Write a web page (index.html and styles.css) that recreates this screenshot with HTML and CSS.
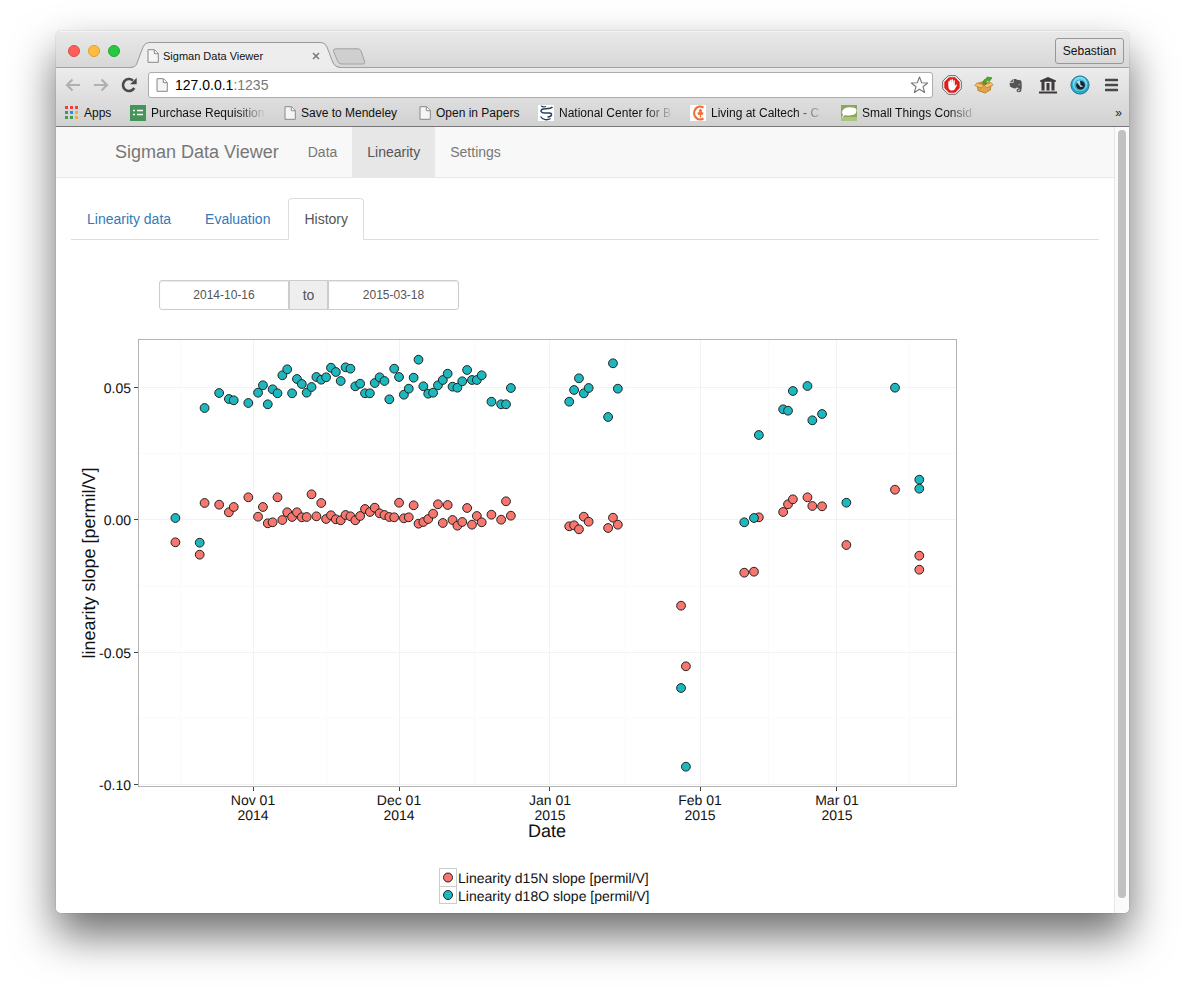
FILE: index.html
```html
<!DOCTYPE html>
<html lang="en">
<head>
<meta charset="utf-8">
<title>Sigman Data Viewer</title>
<link rel="stylesheet" href="styles.css">
</head>
<body>
<svg class="defs" width="0" height="0" aria-hidden="true">
  <symbol id="page" viewBox="0 0 12 14">
    <path d="M1 .7h6.5L11.3 4.5v8.8H1z" fill="#f5f5f5" stroke="#888"/>
    <path d="M7.3.9v3.8h3.8" fill="#fff" stroke="#888"/>
  </symbol>
</svg>
<div class="window">
  <header class="titlebar">
    <div class="lights">
      <button class="light red" aria-label="Close window"></button>
      <button class="light yellow" aria-label="Minimize window"></button>
      <button class="light green" aria-label="Zoom window"></button>
    </div>
    <div class="tab">
      <svg class="tab-shape" viewBox="0 0 210 26" aria-hidden="true">
        <path d="M0 26C5 25 6 24 7 21L13 5Q15 .5 19 .5H191Q195 .5 197 5L203 21Q205 25 210 26z" fill="#ededed"/>
        <path d="M0 25.5C5 25 6 24 7 21L13 5Q15 .5 19 .5H191Q195 .5 197 5L203 21Q205 25 210 25.5" fill="none" stroke="#999"/>
      </svg>
      <svg class="tab-page"><use href="#page"/></svg>
      <span class="tab-title">Sigman Data Viewer</span>
      <button class="tab-close" aria-label="Close tab"><svg width="8" height="8" viewBox="0 0 8 8"><path d="M1 1l6 6M7 1L1 7" stroke="#777" stroke-width="1.5"/></svg></button>
    </div>
    <button class="new-tab" aria-label="New tab"><svg width="34" height="17" viewBox="0 0 34 17"><path d="M4 .8H26Q28 .8 29 3L32.5 13Q33.4 16 31 16H9Q7 16 5.6 13L1.5 3.5Q.8 .8 4 .8z" fill="#cfcfcf" stroke="#a2a2a2"/></svg></button>
    <button class="profile">Sebastian</button>
  </header>

  <div class="chrome">
    <div class="toolbar">
      <button class="tool back" aria-label="Back"><svg width="16" height="14" viewBox="0 0 16 14"><path d="M15 7H2M7.5 1.5L2 7l5.5 5.5" fill="none" stroke="#b0b0b0" stroke-width="2.2"/></svg></button>
      <button class="tool forward" aria-label="Forward"><svg width="16" height="14" viewBox="0 0 16 14"><path d="M1 7h13M8.5 1.5L14 7l-5.5 5.5" fill="none" stroke="#b0b0b0" stroke-width="2.2"/></svg></button>
      <button class="tool reload" aria-label="Reload"><svg width="16" height="16" viewBox="0 0 16 16"><path d="M13.2 11A6 6 0 1 1 12 3.6" fill="none" stroke="#4a4a4a" stroke-width="2.6"/><path d="M15.7 .8V7.300H9z" fill="#4a4a4a"/></svg></button>
      <div class="omnibox">
        <svg class="omni-page"><use href="#page"/></svg>
        <div class="url" role="textbox" aria-label="Address" tabindex="0">127.0.0.1<span class="port">:1235</span></div>
        <button class="tool" aria-label="Bookmark this page"><svg width="19" height="18" viewBox="0 0 19 18"><path d="M9.500 1l2.200 5.700 6 .3-4.700 3.700 1.600 5.800-5.100-3.300-5.100 3.300L6 10.700 1.300 7l6-.3z" fill="#fff" stroke="#777" stroke-width="1.100" stroke-linejoin="round"/></svg></button>
      </div>
      <div class="extensions">
        <button class="tool" aria-label="Ad blocker"><svg width="20" height="20" viewBox="0 0 20 20"><path d="M6.200.7h7.600l5.500 5.500v7.600l-5.500 5.500H6.200L.7 13.800V6.200z" fill="#f4f4f4" stroke="#666"/><path d="M6.900 2.300h6.200l4.600 4.600v6.200l-4.600 4.600H6.900l-4.600-4.600V6.900z" fill="#de1f1c"/><path d="M6.300 10.500V6.400q.7-.8 1.300 0V9l.2-4q.7-.9 1.400 0l.1 3.600.3-4.200q.8-.8 1.400 0V8.800l.5-3.400q.8-.6 1.300.1V11l1-1.300q1-.5 1.300.4l-2.300 4.200q-1 1.300-3.200 1.200-3.300 0-3.300-5z" fill="#fff"/></svg></button>
        <button class="tool" aria-label="Package extension"><svg width="20" height="18" viewBox="0 0 20 18"><path d="M3 7.500l7 2 7-2-.6 6.500L11 17l-7-2.500z" fill="#e2a544" stroke="#a8752a" stroke-width=".8"/><path d="M3 7L.7 9.500 7 12l3-3 2.500 3 6.700-3L17 6.500l-7 2.500z" fill="#f0c272" stroke="#b27c2d" stroke-width=".7"/><path d="M3 7l6-2 8 1.500L10 9z" fill="#c78f3f"/><path d="M9 8c0-4 2-5.500 4.500-5.500L12.800 1 18 1.800l-3 4-.7-1.500c-2 0-2.300 1-2.300 3.900z" fill="#4aac28" stroke="#2d7e1d" stroke-width=".6"/></svg></button>
        <button class="tool" aria-label="Evernote"><svg width="14" height="15" viewBox="0 0 16 17"><path d="M1 4.500L4.500 1v3.500z" fill="#666"/><path d="M5.300 1H8l1 1 4 .6q1 .2 1.200 1.400.8 6-.2 10.500-.5 1.800-2.800 1.800-2.600 0-2.600-2 0-2.400 2.700-2v1.500q-1.200-.2-1.200.6 0 .6 1 .6 1.200 0 1-2.700-2 .3-2.900-2-.5 1.800-2.800 1.500Q2 10.700 1.300 9.500.6 7 .8 5.300h4.500z" fill="#555"/><path d="M10.700 7.800q1-1.300 2 .2" fill="none" stroke="#ddd" stroke-width=".8"/></svg></button>
        <button class="tool" aria-label="Library"><svg width="18" height="18" viewBox="0 0 18 18"><path d="M9 1l8 3.500v1.300H1V4.500zM2.500 5.500h3v9h-3zM7.500 7h3v7.500h-3zM12.500 5.500h3v9h-3zM0 15.500h18v2H0z" fill="#3e393d"/></svg></button>
        <button class="tool" aria-label="Eye extension"><svg width="20" height="20" viewBox="0 0 20 20"><circle cx="10" cy="10" r="9.100" fill="#28a6c9" stroke="#217692"/><circle cx="10" cy="9" r="7.300" fill="#7bdcf0"/><circle cx="10" cy="10" r="5.800" fill="#3fa9cc"/><circle cx="10.500" cy="10.300" r="4.300" fill="#15242e"/><path d="M6.500 7q1.500-2 3.500-1.500l.5 4.500 3 1.500-3 .5z" fill="#b7d9e4"/></svg></button>
        <button class="tool" aria-label="Menu"><svg width="13" height="14" viewBox="0 0 13 14"><path d="M1 2h11M1 7h11M1 12h11" stroke="#494949" stroke-width="2.600" stroke-linecap="round"/></svg></button>
      </div>
    </div>
    <nav class="bookmarks" aria-label="Bookmarks">
      <a class="mark apps" href="#"><svg width="14" height="14" viewBox="0 0 14 14"><path d="M0 0h3v3H0zM5 0h3v3H5zM10 0h3v3h-3z" fill="#e8453c"/><path d="M0 5h3v3H0zM0 10h3v3H0zM5 10h3v3H5z" fill="#3c9d57"/><path d="M5 5h3v3H5z" fill="#3b83f0"/><path d="M10 5h3v3h-3zM10 10h3v3h-3z" fill="#f2ae2e"/></svg><span>Apps</span></a>
      <a class="mark purchase faded" href="#"><svg width="16" height="16" viewBox="0 0 16 16"><path d="M0 0h16v16H0z" fill="#45955a"/><path d="M3 5.500h2M3 9.500h2M7 5.500h6M7 9.500h6" stroke="#fff" stroke-width="1.500"/></svg><span>Purchase Requisition</span></a>
      <a class="mark mendeley" href="#"><svg width="12" height="14"><use href="#page"/></svg><span>Save to Mendeley</span></a>
      <a class="mark papers" href="#"><svg width="12" height="14"><use href="#page"/></svg><span>Open in Papers</span></a>
      <a class="mark ncbi faded" href="#"><svg width="16" height="16" viewBox="0 0 16 16"><path d="M0 0h16v16H0z" fill="#fff"/><path d="M14.500 2C12 4.500 8 3.200 5 4 1.500 5.200 3 8 6.500 8c3.500-.2 7.500-.5 7 2-.3 1.300-2 1.800-4 2" fill="none" stroke="#25405f" stroke-width="1.500"/><path d="M3 1q2.500 1.300 5 .5M2.500 11.500c2 3.500 7 4.200 10 2" fill="none" stroke="#25405f" stroke-width="1.300"/></svg><span>National Center for B</span></a>
      <a class="mark caltech faded" href="#"><svg width="16" height="16" viewBox="0 0 16 16"><path d="M0 0h16v16H0z" fill="#fff"/><path d="M13.500 2.600A6 6.500 0 1 0 13.500 13.400" fill="none" stroke="#f26f38" stroke-width="2.200"/><path d="M10.500 3.500l1.700 2-.6 1.500 2 .8-.8 2-1.700.3v2.400h-1.300v-2.400l-1.700-.3-.8-2 2-.8-.6-1.500z" fill="#f26f38"/></svg><span>Living at Caltech - C</span></a>
      <a class="mark things faded" href="#"><svg width="16" height="16" viewBox="0 0 16 16"><path d="M0 0h16v16H0z" fill="#8da65e"/><path d="M0 12h16v4H0z" fill="#abc47e"/><path d="M1 7q1-4.500 8-4.700 6.500 0 6.500 3.200 0 4.800-7.500 5-2.500 0-4-.5L.5 13l1.700-3.500Q1 8.500 1 7z" fill="#fff"/></svg><span>Small Things Consid</span></a>
      <button class="more" aria-label="More bookmarks">»</button>
    </nav>
  </div>

  <div class="viewport">
    <main class="page">
      <nav class="navbar">
        <a class="brand" href="#">Sigman Data Viewer</a>
        <a class="nav-link" href="#">Data</a>
        <a class="nav-link active" href="#">Linearity</a>
        <a class="nav-link" href="#">Settings</a>
      </nav>
      <div class="content">
        <div class="tabs">
          <a class="tab-link" href="#">Linearity data</a>
          <a class="tab-link" href="#">Evaluation</a>
          <a class="tab-link active" href="#">History</a>
        </div>
        <div class="dates">
          <input class="date start" type="text" value="2014-10-16" aria-label="Start date">
          <span class="to">to</span>
          <input class="date end" type="text" value="2015-03-18" aria-label="End date">
        </div>
        <svg class="chart" viewBox="71 325 900 588" role="img" aria-label="Linearity slope by date">
          <path class="minor" d="M180.500 340V786M326.500 340V786M474.500 340V786M625.500 340V786M768.500 340V786M909.500 340V786M139 453.500H956M139 586H956M139 718H956"/>
          <path class="major" d="M253.500 340V786M399.500 340V786M549.500 340V786M700.500 340V786M836.500 340V786M139 387.500H956M139 519.500H956M139 652.500H956M139 784.500H956"/>
          <rect class="frame" x="138.500" y="339.500" width="818" height="447"/>
          <path class="ticks" d="M134 387.500h4M134 519.500h4M134 652.500h4M134 784.500h4M253.500 787v4M399.500 787v4M549.500 787v4M700.500 787v4M836.500 787v4"/>
          <g id="points"></g>
          <g class="ylab">
            <text x="131" y="393">0.05</text>
            <text x="131" y="525">0.00</text>
            <text x="131" y="658">-0.05</text>
            <text x="131" y="790">-0.10</text>
          </g>
          <g class="xlab">
            <text x="253" y="805">Nov 01</text><text x="253" y="820">2014</text>
            <text x="399" y="805">Dec 01</text><text x="399" y="820">2014</text>
            <text x="550" y="805">Jan 01</text><text x="550" y="820">2015</text>
            <text x="700" y="805">Feb 01</text><text x="700" y="820">2015</text>
            <text x="837" y="805">Mar 01</text><text x="837" y="820">2015</text>
          </g>
          <text class="axis-title" x="547" y="837">Date</text>
          <text class="axis-title" transform="translate(95 563) rotate(-90)">linearity slope [permil/V]</text>
          <rect class="key" x="439.500" y="868.500" width="17" height="18"/>
          <rect class="key" x="439.500" y="886.500" width="17" height="17"/>
          <circle class="n15" cx="448" cy="877.500" r="4.500"/>
          <circle class="o18" cx="448" cy="895" r="4.500"/>
          <text x="458" y="883">Linearity d15N slope [permil/V]</text>
          <text x="458" y="901">Linearity d18O slope [permil/V]</text>
        </svg>
      </div>
    </main>
    <div class="scrollbar" aria-hidden="true"><div class="thumb"></div></div>
  </div>
</div>
<script src="chart.js"></script>
</body>
</html>
```
FILE: styles.css
```css
* { box-sizing: border-box; }
body {
  margin: 0;
  padding: 31px 56px 80px;
  background: #fff;
  font-family: "Liberation Sans", Arial, sans-serif;
  color: #333;
}
a { text-decoration: none; }
button { font-family: inherit; padding: 0; border: 0; background: none; }
svg { display: block; flex: none; }
.defs { position: absolute; }

.window {
  border-radius: 5px;
  box-shadow: 0 0 1px rgba(0,0,0,.5), 0 22px 44px rgba(0,0,0,.58);
}

/* Title bar */
.titlebar {
  display: flex;
  align-items: flex-end;
  height: 37px;
  padding-right: 5px;
  border-radius: 5px 5px 0 0;
  border-top: 1px solid #f4f4f4;
  border-bottom: 1px solid #a2a2a2;
  background: linear-gradient(#e9e9e9, #d7d7d7);
}
.lights { display: flex; gap: 8px; align-self: center; padding: 2px 0 0 12px; width: 74px; }
.light { width: 12px; height: 12px; border-radius: 50%; border: 1px solid; }
.red { background: #fc605b; border-color: #df4a45; }
.yellow { background: #fdbc40; border-color: #de9f34; }
.green { background: #26c940; border-color: #1fa934; }
.tab {
  position: relative;
  display: flex;
  align-items: center;
  width: 210px;
  height: 26px;
  margin-bottom: -1px;
  padding: 2px 18px 0 17px;
}
.tab-shape { position: absolute; inset: 0; width: 100%; height: 100%; }
.tab-page { position: relative; width: 12px; height: 14px; }
.tab-title { position: relative; flex: 1; margin-left: 4px; font-size: 11px; color: #111; white-space: nowrap; }
.tab-close { position: relative; margin-right: 2px; }
.new-tab { margin-bottom: 2px; margin-left: -8px; }
.profile {
  width: 69px;
  height: 26px;
  margin: 0 0 3px auto;
  border: 1px solid #979797;
  border-radius: 3px;
  background: linear-gradient(#e8e8e8, #dadada);
  font-size: 12px;
  color: #111;
}

/* Toolbar and bookmarks */
.chrome {
  background: linear-gradient(#ececec, #d1d1d1);
  border-bottom: 1px solid #777;
}
.toolbar { display: flex; align-items: center; height: 34px; padding: 0 11px 0 9px; }
.back { margin-right: 12px; }
.forward { margin-right: 12px; }
.reload { margin-right: 11px; }
.omnibox {
  display: flex;
  flex: 1;
  align-items: center;
  height: 26px;
  padding: 0 3px 0 7px;
  border: 1px solid #acacac;
  border-radius: 3px;
  background: #fff;
}
.omni-page { width: 12px; height: 16px; }
.url { flex: 1; margin-left: 7px; font-size: 14px; color: #000; }
.port { color: #777; }
.extensions { display: flex; align-items: center; margin-left: 9px; }
.extensions .tool { width: 32px; }
.extensions .tool:first-child { width: 20px; margin-right: 6px; }
.extensions .tool:last-child { width: 13px; margin-left: 9px; }
.extensions svg { margin: 0 auto; }
.bookmarks { display: flex; align-items: center; height: 24px; padding: 0 7px 2px 9px; }
.mark { display: flex; align-items: center; gap: 5px; font-size: 12px; color: #111; white-space: nowrap; }
.mark span { flex: 1; }
.faded span { -webkit-mask-image: linear-gradient(to right, #000 75%, transparent); mask-image: linear-gradient(to right, #000 75%, transparent); }
.apps { width: 48px; margin-right: 17px; }
.purchase { width: 136px; margin-right: 18px; }
.mendeley { width: 116px; margin-right: 19px; }
.papers { width: 103px; margin-right: 16px; }
.ncbi { width: 136px; margin-right: 16px; }
.caltech { width: 134px; margin-right: 17px; }
.things { width: 136px; }
.more { margin-left: auto; font-size: 12px; color: #222; }

/* Page */
.viewport { display: flex; border-radius: 0 0 5px 5px; background: #fff; overflow: hidden; }
.page { flex: 1; min-width: 0; }
.scrollbar { display: flex; width: 15px; padding: 3px 3px 15px; border-left: 1px solid #e6e6e6; background: #fafafa; }
.thumb { flex: 1; border-radius: 4px; background: #c1c1c1; }
.navbar {
  display: flex;
  height: 51px;
  padding-left: 44px;
  border-bottom: 1px solid #e7e7e7;
  background: #f8f8f8;
  line-height: 20px;
}
.brand { padding: 15px 14px 15px 15px; font-size: 18px; color: #777; }
.nav-link { padding: 15px; font-size: 14px; color: #777; }
.nav-link.active { background: #e7e7e7; color: #555; }
.content { padding: 20px 15px 0; }
.tabs { display: flex; gap: 2px; border-bottom: 1px solid #ddd; }
.tab-link {
  margin-bottom: -1px;
  padding: 10px 15px;
  border: 1px solid transparent;
  border-radius: 4px 4px 0 0;
  font-size: 14px;
  line-height: 20px;
  color: #337ab7;
}
.tab-link.active { border-color: #ddd; border-bottom-color: #fff; background: #fff; color: #555; }
.dates { display: flex; width: 300px; height: 30px; margin: 40px 0 15px 88px; }
.date {
  min-width: 0;
  padding: 5px 10px;
  border: 1px solid #ccc;
  background: #fff;
  box-shadow: inset 0 1px 1px rgba(0,0,0,.08);
  font-family: inherit;
  font-size: 12px;
  text-align: center;
  color: #555;
}
.start { width: 130px; border-radius: 3px 0 0 3px; }
.end { flex: 1; border-radius: 0 3px 3px 0; }
.to {
  width: 39px;
  border: 1px solid #ccc;
  background: #eee;
  font-size: 14px;
  line-height: 28px;
  text-align: center;
  color: #555;
}

/* Chart */
.chart { width: 900px; max-width: 100%; height: auto; font-size: 14px; fill: #111; text-rendering: geometricPrecision; }
.minor { stroke: #fafafa; fill: none; }
.major { stroke: #f2f2f2; fill: none; }
.frame { fill: none; stroke: #b3b3b3; }
.ticks { stroke: #444; }
.n15, .o18 { stroke: #222; stroke-width: 1; }
.n15 { fill: #f8766d; }
.o18 { fill: #1cb8be; }
.ylab { text-anchor: end; }
.xlab, .axis-title { text-anchor: middle; }
.axis-title { font-size: 18px; }
.key { fill: #fff; stroke: #ccc; }
```
FILE: chart.js
```js
// Each point is [days since 2014-10-16, vertical position in chart units].
const n15 = [
  [0,542.3],[5,554.7],[6,503],[9,504.7],[11,512.3],[12,507],[15,497.3],[17,516.7],[18,507],[19,523.3],
  [20,522.3],[21,497.3],[22,520],[23,512.3],[24,517],[25,512.3],[26,517.3],[27,517],[28,494.3],[29,516.3],
  [30,503],[31,519],[32,515.3],[33,519.3],[34,520.3],[35,515],[36,516.3],[37,520.3],[38,516],[39,509],
  [40,512],[41,507.7],[42,513.3],[43,515],[44,517],[45,517.3],[46,502.7],[47,518.3],[48,517.3],[49,505.3],
  [50,523.7],[51,522],[52,519],[53,513.7],[54,504.3],[55,523],[56,505],[57,520],[58,525.7],[59,522],
  [60,508],[61,524.7],[62,516],[63,522.3],[65,514.7],[67,519.7],[68,501.3],[69,515.7],[81,526.3],[82,525.3],
  [83,529.3],[84,516.7],[85,521.7],[89,528],[90,517.7],[91,524.7],[104,605.7],[105,666.3],[117,572.7],
  [119,571.7],[120,517.3],[125,512],[126,504.3],[127,499.3],[130,497.3],[131,506],[133,506.3],[138,545],
  [148,489.7],[153,555.7],[153,569.7]
];
const o18 = [
  [0,518],[5,542.7],[6,408],[9,393],[11,399],[12,400.3],[15,403],[17,392.7],[18,385.3],[19,404.3],
  [20,389.3],[21,393.3],[22,375.3],[23,369.3],[24,393.3],[25,379],[26,384],[27,392.7],[28,387],[29,377],
  [30,379.7],[31,377.3],[32,367.7],[33,372],[34,381],[35,367.3],[36,368.7],[37,386.3],[38,383.7],[39,393.3],
  [40,393.3],[41,383],[42,377.3],[43,381],[44,399.3],[45,368.7],[46,377],[47,394.7],[48,388.7],[49,377.7],
  [50,359.7],[51,386.3],[52,393.7],[53,392.7],[54,385.3],[55,380],[56,373.7],[57,386.7],[58,387.7],[59,381.3],
  [60,370],[61,380],[62,380],[63,375.3],[65,401.7],[67,404.3],[68,404.3],[69,388],[81,401.7],[82,390],
  [83,378.3],[84,393.3],[85,388],[89,417],[90,363.3],[91,388.7],[104,688],[105,766.7],[117,522.3],
  [119,518],[120,435],[125,409.3],[126,410.7],[127,391],[130,386],[131,420.3],[133,414],[138,502.7],
  [148,387.7],[153,479.7],[153,488.7]
];
const group = document.getElementById("points");
function draw(series, name) {
  for (const [day, y] of series) {
    const dot = document.createElementNS("http://www.w3.org/2000/svg", "circle");
    dot.setAttribute("class", name);
    dot.setAttribute("cx", 175.4 + day * 4.862);
    dot.setAttribute("cy", y);
    dot.setAttribute("r", 4.4);
    group.appendChild(dot);
  }
}
draw(n15, "n15");
draw(o18, "o18");
```
